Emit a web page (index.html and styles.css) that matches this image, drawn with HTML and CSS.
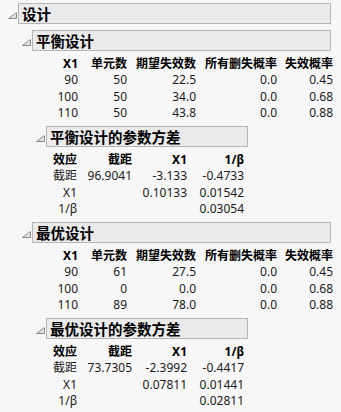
FILE: index.html
```html
<!DOCTYPE html>
<html>
<head>
<meta charset="utf-8">
<link rel="stylesheet" href="styles.css">
</head>
<body>
<div class="outline top">
  <div class="head">
    <span class="tri"><svg width="9" height="7" viewBox="0 0 9 7"><polygon points="0.5,6.5 8.5,6.5 8.5,0.5" fill="#e2e2e2" stroke="#8c8c8c" stroke-width="1"/></svg></span>
    <div class="box wide">设计</div>
  </div>
  <div class="body">
    <div class="outline">
      <div class="head first">
        <span class="tri"><svg width="9" height="7" viewBox="0 0 9 7"><polygon points="0.5,6.5 8.5,6.5 8.5,0.5" fill="#e2e2e2" stroke="#8c8c8c" stroke-width="1"/></svg></span>
        <div class="box wide">平衡设计</div>
      </div>
      <div class="body">
        <div class="t5">
          <div class="th">X1</div><div class="th">单元数</div><div class="th">期望失效数</div><div class="th">所有删失概率</div><div class="th">失效概率</div>
          <div>90</div><div>50</div><div>22.5</div><div>0.0</div><div>0.45</div>
          <div>100</div><div>50</div><div>34.0</div><div>0.0</div><div>0.68</div>
          <div>110</div><div>50</div><div>43.8</div><div>0.0</div><div>0.88</div>
        </div>
        <div class="outline">
          <div class="head">
            <span class="tri"><svg width="9" height="7" viewBox="0 0 9 7"><polygon points="0.5,6.5 8.5,6.5 8.5,0.5" fill="#e2e2e2" stroke="#8c8c8c" stroke-width="1"/></svg></span>
            <div class="box narrow">平衡设计的参数方差</div>
          </div>
          <div class="body">
            <div class="t4">
              <div class="th">效应</div><div class="th">截距</div><div class="th">X1</div><div class="th">1/β</div>
              <div>截距</div><div>96.9041</div><div>-3.133</div><div>-0.4733</div>
              <div>X1</div><div></div><div>0.10133</div><div>0.01542</div>
              <div>1/β</div><div></div><div></div><div>0.03054</div>
            </div>
          </div>
        </div>
      </div>
    </div>
    <div class="outline">
      <div class="head">
        <span class="tri"><svg width="9" height="7" viewBox="0 0 9 7"><polygon points="0.5,6.5 8.5,6.5 8.5,0.5" fill="#e2e2e2" stroke="#8c8c8c" stroke-width="1"/></svg></span>
        <div class="box wide">最优设计</div>
      </div>
      <div class="body">
        <div class="t5">
          <div class="th">X1</div><div class="th">单元数</div><div class="th">期望失效数</div><div class="th">所有删失概率</div><div class="th">失效概率</div>
          <div>90</div><div>61</div><div>27.5</div><div>0.0</div><div>0.45</div>
          <div>100</div><div>0</div><div>0.0</div><div>0.0</div><div>0.68</div>
          <div>110</div><div>89</div><div>78.0</div><div>0.0</div><div>0.88</div>
        </div>
        <div class="outline">
          <div class="head">
            <span class="tri"><svg width="9" height="7" viewBox="0 0 9 7"><polygon points="0.5,6.5 8.5,6.5 8.5,0.5" fill="#e2e2e2" stroke="#8c8c8c" stroke-width="1"/></svg></span>
            <div class="box narrow">最优设计的参数方差</div>
          </div>
          <div class="body">
            <div class="t4">
              <div class="th">效应</div><div class="th">截距</div><div class="th">X1</div><div class="th">1/β</div>
              <div>截距</div><div>73.7305</div><div>-2.3992</div><div>-0.4417</div>
              <div>X1</div><div></div><div>0.07811</div><div>0.01441</div>
              <div>1/β</div><div></div><div></div><div>0.02811</div>
            </div>
          </div>
        </div>
      </div>
    </div>
  </div>
</div>
</body>
</html>
```
FILE: styles.css
```css
html, body {
  margin: 0;
  padding: 0;
  background: #f7f7f7;
}
body {
  font-family: "Noto Sans", "Noto Sans CJK SC", sans-serif;
  font-size: 12px;
  color: #1a1a1a;
  padding: 3px 3px 0 4px;
  width: 334px;
  overflow: hidden;
  height: 412px;
  box-sizing: border-box;
}
.head {
  display: flex;
  align-items: center;
  margin-top: 4.5px;
}
.top > .head { margin-top: 0; }
.head.first { margin-top: 6px; }
.tri {
  width: 14px;
  height: 21px;
  display: flex;
  align-items: center;
  padding-left: 4px;
  padding-top: 3px;
  box-sizing: border-box;
}
.tri svg { display: block; }
.box {
  height: 21px;
  box-sizing: border-box;
  border: 1px solid #b5b5b5;
  background: #ebebeb;
  font-family: "Noto Sans CJK SC", sans-serif;
  font-weight: bold;
  font-size: 14.5px;
  line-height: 19px;
  padding-left: 3px;
  color: #000;
}
.box.wide { flex: 1; }
.box.narrow { width: 202px; }
.body {
  padding-left: 14px;
}
.t5, .t4 {
  display: grid;
  margin-top: 4.5px;
  grid-auto-rows: 16.5px;
  line-height: 16.5px;
  text-align: right;
  white-space: nowrap;
}
.t5 { grid-template-columns: 46px 49px 69px 81px 56px; }
.t4 { grid-template-columns: 31px 55px 55px 57px; }
.th {
  font-weight: bold;
  color: #000;
}
```
